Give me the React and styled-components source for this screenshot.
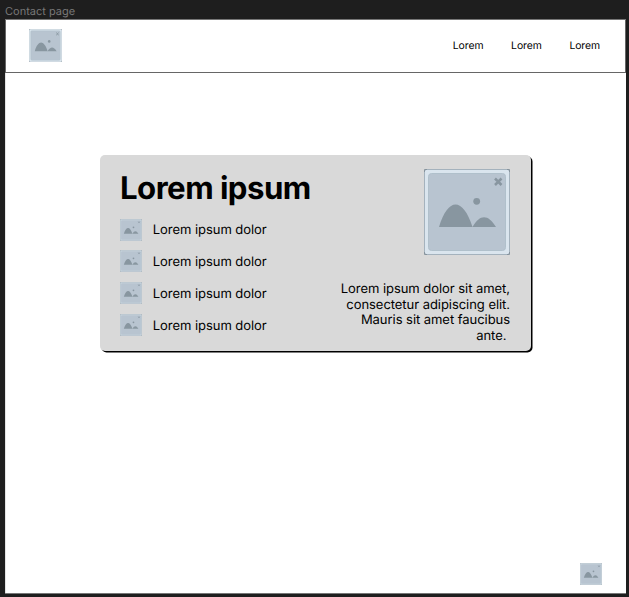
import React from "react";
import styled, { createGlobalStyle } from "styled-components";

const GlobalStyle = createGlobalStyle`
  * { box-sizing: border-box; }
  body {
    margin: 0;
    background: #1e1e1e;
    font-family: Inter, "Liberation Sans", sans-serif;
    color: #000;
    overflow: hidden;
    text-rendering: geometricPrecision;
  }
`;

const Canvas = styled.div`
  height: 597px;
  padding: 4px 3px 3px 5px;
  display: flex;
  flex-direction: column;
`;

const FrameLabel = styled.div`
  height: 15px;
  line-height: 15px;
  font-size: 11px;
  color: #777;
`;

const Frame = styled.main`
  flex: 1;
  display: flex;
  flex-direction: column;
  background: #fff;
  border: solid #777;
  border-width: 1px 0 1px 0;
  box-shadow: inset 1px 0 0 #e4e4e4;
`;

const Header = styled.header`
  height: 53px;
  padding: 0 25px 1px 22.5px;
  display: flex;
  align-items: center;
  justify-content: space-between;
  border: solid #666;
  border-width: 0 1px 1px 1px;
`;

const Nav = styled.nav`
  display: flex;
  gap: 27.7px;
  font-size: 10.4px;
  letter-spacing: -0.08px;
  line-height: 13px;
`;

const Card = styled.section`
  width: 430.5px;
  height: 195.5px;
  margin: 82px 0 0 95px;
  padding: 14px 20.5px 0 20px;
  display: flex;
  justify-content: space-between;
  background: #d9d9d9;
  border-radius: 5px;
  box-shadow: 1.5px 1.5px 0 #000;
`;

const Details = styled.div`
  display: flex;
  flex-direction: column;
`;

const Title = styled.h1`
  margin: 0;
  font-size: 31.2px;
  line-height: 38px;
  font-weight: 700;
  letter-spacing: -0.53px;
  white-space: nowrap;
`;

const List = styled.ul`
  list-style: none;
  margin: 11.6px 0 0;
  padding: 0;
  display: grid;
  gap: 9.8px;
`;

const Item = styled.li`
  height: 22px;
  display: flex;
  align-items: center;
  gap: 10.8px;
  font-size: 13px;
  line-height: 16px;
  letter-spacing: -0.05px;
  white-space: nowrap;
`;

const ItemText = styled.span`
  padding-top: 1.2px;
`;

const Aside = styled.div`
  width: 180px;
  display: flex;
  flex-direction: column;
  align-items: flex-end;
`;

const Copy = styled.p`
  margin: 27.2px 0 0;
  font-size: 13px;
  line-height: 15.6px;
  letter-spacing: -0.05px;
  text-align: right;
  white-space: pre;
`;

const Footer = styled.footer`
  margin: auto 24px 8px 0;
  display: flex;
  justify-content: flex-end;
`;

const Picture = styled.svg`
  display: block;
  flex: none;
  width: ${(p) => p.$size}px;
  height: ${(p) => p.$size}px;
`;

function Placeholder({ size }) {
  const edge = size < 30 ? 2.4 : 1;
  return (
    <Picture $size={size} viewBox="0 0 86 86" aria-hidden="true">
      <rect x={edge / 2} y={edge / 2} width={86 - edge} height={86 - edge} rx="2" fill="#dae5ee" stroke="#a4b2bd" strokeWidth={edge} />
      <path d="M.5 3V.5H3M83 .5h2.5V3M85.5 83v2.5H83M3 85.5H.5V83" fill="none" stroke="#87949e" />
      <rect x="4.5" y="4.5" width="77" height="77" rx="3" fill="#b8c4d0" stroke="#b0c0cb" />
      <path d="M15 58C24 28 39 28 48.5 58C56 45 64 45 72 58Z" fill="#8896a0" />
      <circle cx="52.7" cy="32.3" r="3.4" fill="#8896a0" />
      <path d="m71 9.5 6.5 6.500m0-6.5L71 16" stroke="#8896a0" strokeWidth="2.5" />
    </Picture>
  );
}

const contacts = ["Lorem ipsum dolor", "Lorem ipsum dolor", "Lorem ipsum dolor", "Lorem ipsum dolor"];

export default function App() {
  return (
    <Canvas>
      <GlobalStyle />
      <FrameLabel>Contact page</FrameLabel>
      <Frame>
        <Header>
          <Placeholder size={33} />
          <Nav>
            <span>Lorem</span>
            <span>Lorem</span>
            <span>Lorem</span>
          </Nav>
        </Header>
        <Card>
          <Details>
            <Title>Lorem ipsum</Title>
            <List>
              {contacts.map((text, i) => (
                <Item key={i}>
                  <Placeholder size={22} />
                  <ItemText>{text}</ItemText>
                </Item>
              ))}
            </List>
          </Details>
          <Aside>
            <Placeholder size={86} />
            <Copy>{"Lorem ipsum dolor sit amet,\nconsectetur adipiscing elit.\nMauris sit amet faucibus\nante. "}</Copy>
          </Aside>
        </Card>
        <Footer>
          <Placeholder size={22} />
        </Footer>
      </Frame>
    </Canvas>
  );
}
